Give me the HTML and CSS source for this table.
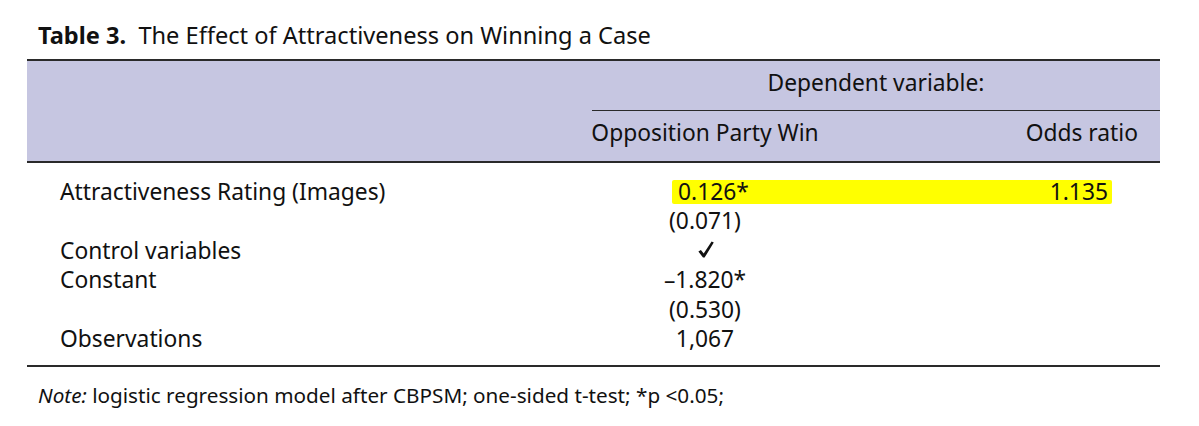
FILE: index.html
```html
<!DOCTYPE html>
<html>
<head>
<meta charset="utf-8">
<link rel="stylesheet" href="styles.css">
</head>
<body>
<div class="page">
  <div class="title"><b>Table 3.</b>&nbsp; The Effect of Attractiveness on Winning a Case</div>
  <div class="table">
    <div class="head">
      <div class="hrow1">
        <div class="dep">Dependent variable:</div>
      </div>
      <div class="hrow2">
        <div class="c2">Opposition Party Win</div>
        <div class="c3">Odds ratio</div>
      </div>
    </div>
    <div class="body">
      <div class="row">
        <div class="lab">Attractiveness Rating (Images)</div>
        <div class="hl"><span class="v1">0.126*</span><span class="v2">1.135</span></div>
      </div>
      <div class="row"><div class="lab"></div><div class="c2">(0.071)</div></div>
      <div class="row"><div class="lab">Control variables</div><div class="c2 check"><svg class="tick" width="16" height="17" viewBox="0 0 16 17"><path d="M0.4 10.6 L2.9 9.1 L5.7 12.4 L13.6 0.4 L15.8 1.4 L6.6 16.6 L5.0 16.6 Z" fill="#111"/></svg></div></div>
      <div class="row"><div class="lab">Constant</div><div class="c2">–1.820*</div></div>
      <div class="row"><div class="lab"></div><div class="c2">(0.530)</div></div>
      <div class="row"><div class="lab">Observations</div><div class="c2">1,067</div></div>
    </div>
  </div>
  <div class="note"><i>Note:</i> logistic regression model after CBPSM; one-sided t-test; *p &lt;0.05;</div>
</div>
</body>
</html>
```

FILE: styles.css
```css
html, body {
  margin: 0;
  padding: 0;
  background: #ffffff;
}
body {
  font-family: "Noto Sans", "Open Sans", sans-serif;
  color: #111;
}
.page {
  padding: 20px 39px 0 27px;
  width: 1133px;
}
.title {
  font-size: 23.6px;
  line-height: 30px;
  padding-left: 11px;
  height: 39px;
}
.title b {
  font-weight: 700;
}
.table {
  border-top: 2px solid #2a2a2a;
  border-bottom: 2px solid #2a2a2a;
}
.head {
  background: #c6c6e1;
  border-bottom: 2px solid #2a2a2a;
  font-size: 22.8px;
}
.hrow1 {
  display: flex;
  justify-content: flex-end;
  height: 50px;
  align-items: center;
}
.dep {
  width: 568px;
  text-align: center;
  border-bottom: 1.5px solid #2a2a2a;
  height: 50px;
  line-height: 44px;
  box-sizing: border-box;
}
.hrow2 {
  display: grid;
  grid-template-columns: 563px 230px 340px;
  height: 50px;
  line-height: 44px;
}
.hrow2 .c2 {
  grid-column: 2;
  text-align: center;
}
.hrow2 .c3 {
  text-align: right;
  padding-right: 22px;
}
.body {
  padding: 14px 0 12px;
  font-size: 22.8px;
}
.row {
  display: grid;
  grid-template-columns: 563px 230px 340px;
  height: 29.4px;
  line-height: 29px;
}
.lab {
  padding-left: 33px;
}
.c2 {
  text-align: center;
}
.check {
  display: flex;
  justify-content: center;
  align-items: flex-start;
}
.tick {
  display: block;
  margin-top: 5px;
  margin-left: 1px;
}
.hl {
  grid-column: 2 / 4;
  margin-left: 82px;
  width: 440px;
  background: #ffff00;
  display: flex;
  justify-content: space-between;
  padding: 0 4px 0 6px;
  box-sizing: border-box;
  height: 24px;
  line-height: 24px;
  margin-top: 3px;
  border-radius: 2px;
}
.note {
  font-size: 20.7px;
  padding: 14px 0 0 11px;
}
```
